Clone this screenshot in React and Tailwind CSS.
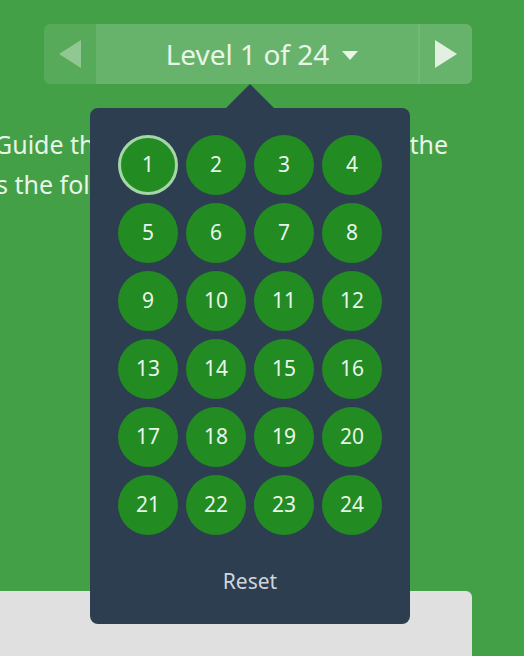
const levels = Array.from({ length: 24 }, (_, i) => i + 1);

const LevelButton = ({ n, current }) => (
    <div
        className={
            "w-[60px] h-[60px] rounded-full bg-[#228b22] flex items-center justify-center text-[21px] text-[#e8f5e9] " +
            (current ? "border-[3px] border-[#a5d6a7]" : "")
        }
    >
        {n}
    </div>
);

const App = () => {
    const current = 1;

    return (
        <div
            className="relative h-[656px] overflow-hidden bg-[#43a047]"
            style={{ fontFamily: '"Noto Sans", "Open Sans", sans-serif' }}
        >
            {/* level selector bar */}
            <div className="ml-[44px] mt-[24px] w-[428px] h-[60px] flex rounded-md overflow-hidden">
                <div className="w-[52px] bg-white/10 flex items-center justify-center">
                    <svg width="22" height="28" viewBox="0 0 22 28">
                        <polygon points="22,0 22,28 0,14" fill="rgba(255,255,255,0.35)" />
                    </svg>
                </div>
                <div className="flex-1 bg-white/20 flex items-center justify-center gap-[13px] pl-[10px]">
                    <span className="text-[28px] text-[#e8f5e9] leading-none">Level {current} of 24</span>
                    <span className="w-0 h-0 border-l-[8px] border-r-[8px] border-t-[9px] border-l-transparent border-r-transparent border-t-[#e8f5e9] mt-[2px]" />
                </div>
                <div className="w-[2px] bg-white/25" />
                <div className="w-[52px] bg-white/20 flex items-center justify-center">
                    <svg width="22" height="28" viewBox="0 0 22 28">
                        <polygon points="0,0 0,28 22,14" fill="rgba(255,255,255,0.8)" />
                    </svg>
                </div>
            </div>

            {/* instructions */}
            <div className="mt-[40px] text-[25px] leading-[40px] text-[#e8f5e9] whitespace-nowrap">
                <div className="flex justify-between w-[454px] ml-[-6px]">
                    <span>Guide the</span>
                    <span>the</span>
                </div>
                <div className="ml-[-4px]">s the following blocks</div>
            </div>

            {/* workspace */}
            <div className="mt-[387px] w-[472px] h-[80px] bg-[#e0e0e0] rounded-tr-md" />

            {/* level dropdown */}
            <div className="absolute left-[90px] top-[108px] w-[320px] h-[516px] bg-[#2c3e50] rounded-lg flex flex-col items-center pt-[27px]">
                <div className="absolute top-[-24px] left-[136px] w-0 h-0 border-l-[24px] border-r-[24px] border-b-[24px] border-l-transparent border-r-transparent border-b-[#2c3e50]" />
                <div className="grid grid-cols-4 gap-2">
                    {levels.map((n) => (
                        <LevelButton key={n} n={n} current={n === current} />
                    ))}
                </div>
                <div className="mt-[32px] h-[30px] flex items-center text-[21px] text-[#d0d6dc]">Reset</div>
            </div>
        </div>
    );
};

export default App;
